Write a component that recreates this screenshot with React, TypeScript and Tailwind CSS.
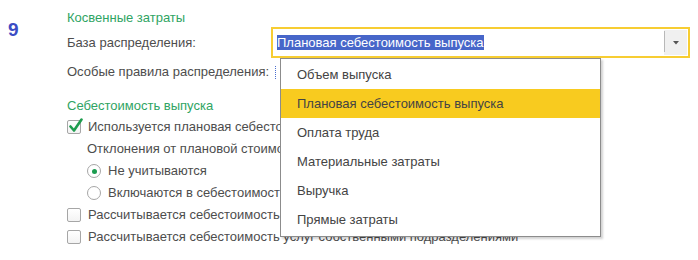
import React from 'react';

const items = [
  'Объем выпуска',
  'Плановая себестоимость выпуска',
  'Оплата труда',
  'Материальные затраты',
  'Выручка',
  'Прямые затраты',
];

const Checkbox = ({ checked }: { checked?: boolean }) => (
  <div className="relative w-[14px] h-[14px] shrink-0 rounded-[2px] border border-[#a6a6a6] bg-gradient-to-b from-white to-[#f3f3f3]">
    {checked && (
      <svg className="absolute left-[1px] top-[-3px]" width="14" height="15" viewBox="0 0 14 15">
        <path d="M1.5 8.5 L5 12.5 L12.5 1.5" fill="none" stroke="#1f9d4f" strokeWidth="2.6" strokeLinecap="round" strokeLinejoin="round" />
      </svg>
    )}
  </div>
);

const Radio = ({ checked }: { checked?: boolean }) => (
  <div className="w-[14px] h-[14px] shrink-0 rounded-full border border-[#a6a6a6] bg-white flex items-center justify-center">
    {checked && <div className="w-[5px] h-[5px] rounded-full bg-[#1c9c50]" />}
  </div>
);

export default function App() {
  return (
    <div
      className="relative w-[698px] h-[260px] overflow-hidden bg-white text-[13px] leading-[16px] text-[#4d4d4d]"
      style={{ fontFamily: '"Liberation Sans", Arial, sans-serif' }}
    >
      <div className="flex">
        {/* Step number */}
        <div className="w-[67px] shrink-0 pl-[8px] pt-[19px] text-[19px] leading-[22px] font-bold text-[#3b4cc4]">9</div>

        <div className="flex flex-col pt-[10px]">
          <div className="h-[16px] text-[#2fa463]">Косвенные затраты</div>

          {/* Combo row */}
          <div className="mt-[1px] h-[31px] flex items-center">
            <div className="w-[204px] shrink-0">База распределения:</div>
            <div className="relative w-[419px] h-[31px] border-2 border-[#f7cd32] bg-white flex items-center">
              <div className="flex-1 pl-[4px]">
                <span className="bg-[#4766c9] text-white pr-[1px]">Плановая себестоимость выпуска</span>
              </div>
              <div className="h-[25px] w-[23px] mr-[1px] bg-[#f0f0f0] flex items-center justify-center relative">
                <div className="absolute left-0 top-[1px] bottom-[3px] w-[1px] bg-[#b8b8b8]" />
                <svg width="6" height="4" viewBox="0 0 6 4">
                  <path d="M0 0 H6 L3 3.5 Z" fill="#555" />
                </svg>
              </div>

              {/* Dropdown list */}
              <div className="absolute left-[7px] top-[29px] w-[321px] h-[179px] z-10 bg-white border border-[#8c8c8c] shadow-[2px_2px_2px_rgba(0,0,0,0.18)] py-[1px]">
                {items.map((it, i) => (
                  <div
                    key={it}
                    className={`h-[29px] flex items-center pl-[16px] text-[#444] ${i === 1 ? 'bg-[#f8cb1f]' : ''}`}
                  >
                    {it}
                  </div>
                ))}
              </div>
            </div>
          </div>

          <div className="mt-[6px] h-[16px] flex items-center">
            <div className="w-[204px] shrink-0">Особые правила распределения:</div>
            <div className="ml-[4px] h-[13px] border-l border-dotted border-[#4a6fd0]" />
          </div>

          <div className="mt-[18px] h-[16px] text-[#2fa463]">Себестоимость выпуска</div>

          <div className="mt-[2px] h-[22px] flex items-center gap-[7px]">
            <Checkbox checked />
            <span>Используется плановая себестоимость выпуска</span>
          </div>
          <div className="h-[22px] flex items-center pl-[20px]">Отклонения от плановой стоимости выпуска</div>
          <div className="h-[22px] flex items-center gap-[7px] pl-[20px]">
            <Radio checked />
            <span>Не учитываются</span>
          </div>
          <div className="h-[22px] flex items-center gap-[7px] pl-[20px]">
            <Radio />
            <span>Включаются в себестоимость продукции</span>
          </div>
          <div className="h-[22px] flex items-center gap-[7px]">
            <Checkbox />
            <span>Рассчитывается себестоимость полуфабрикатов</span>
          </div>
          <div className="h-[22px] flex items-center gap-[7px]">
            <Checkbox />
            <span>Рассчитывается себестоимость услуг собственными подразделениями</span>
          </div>
        </div>
      </div>
    </div>
  );
}
